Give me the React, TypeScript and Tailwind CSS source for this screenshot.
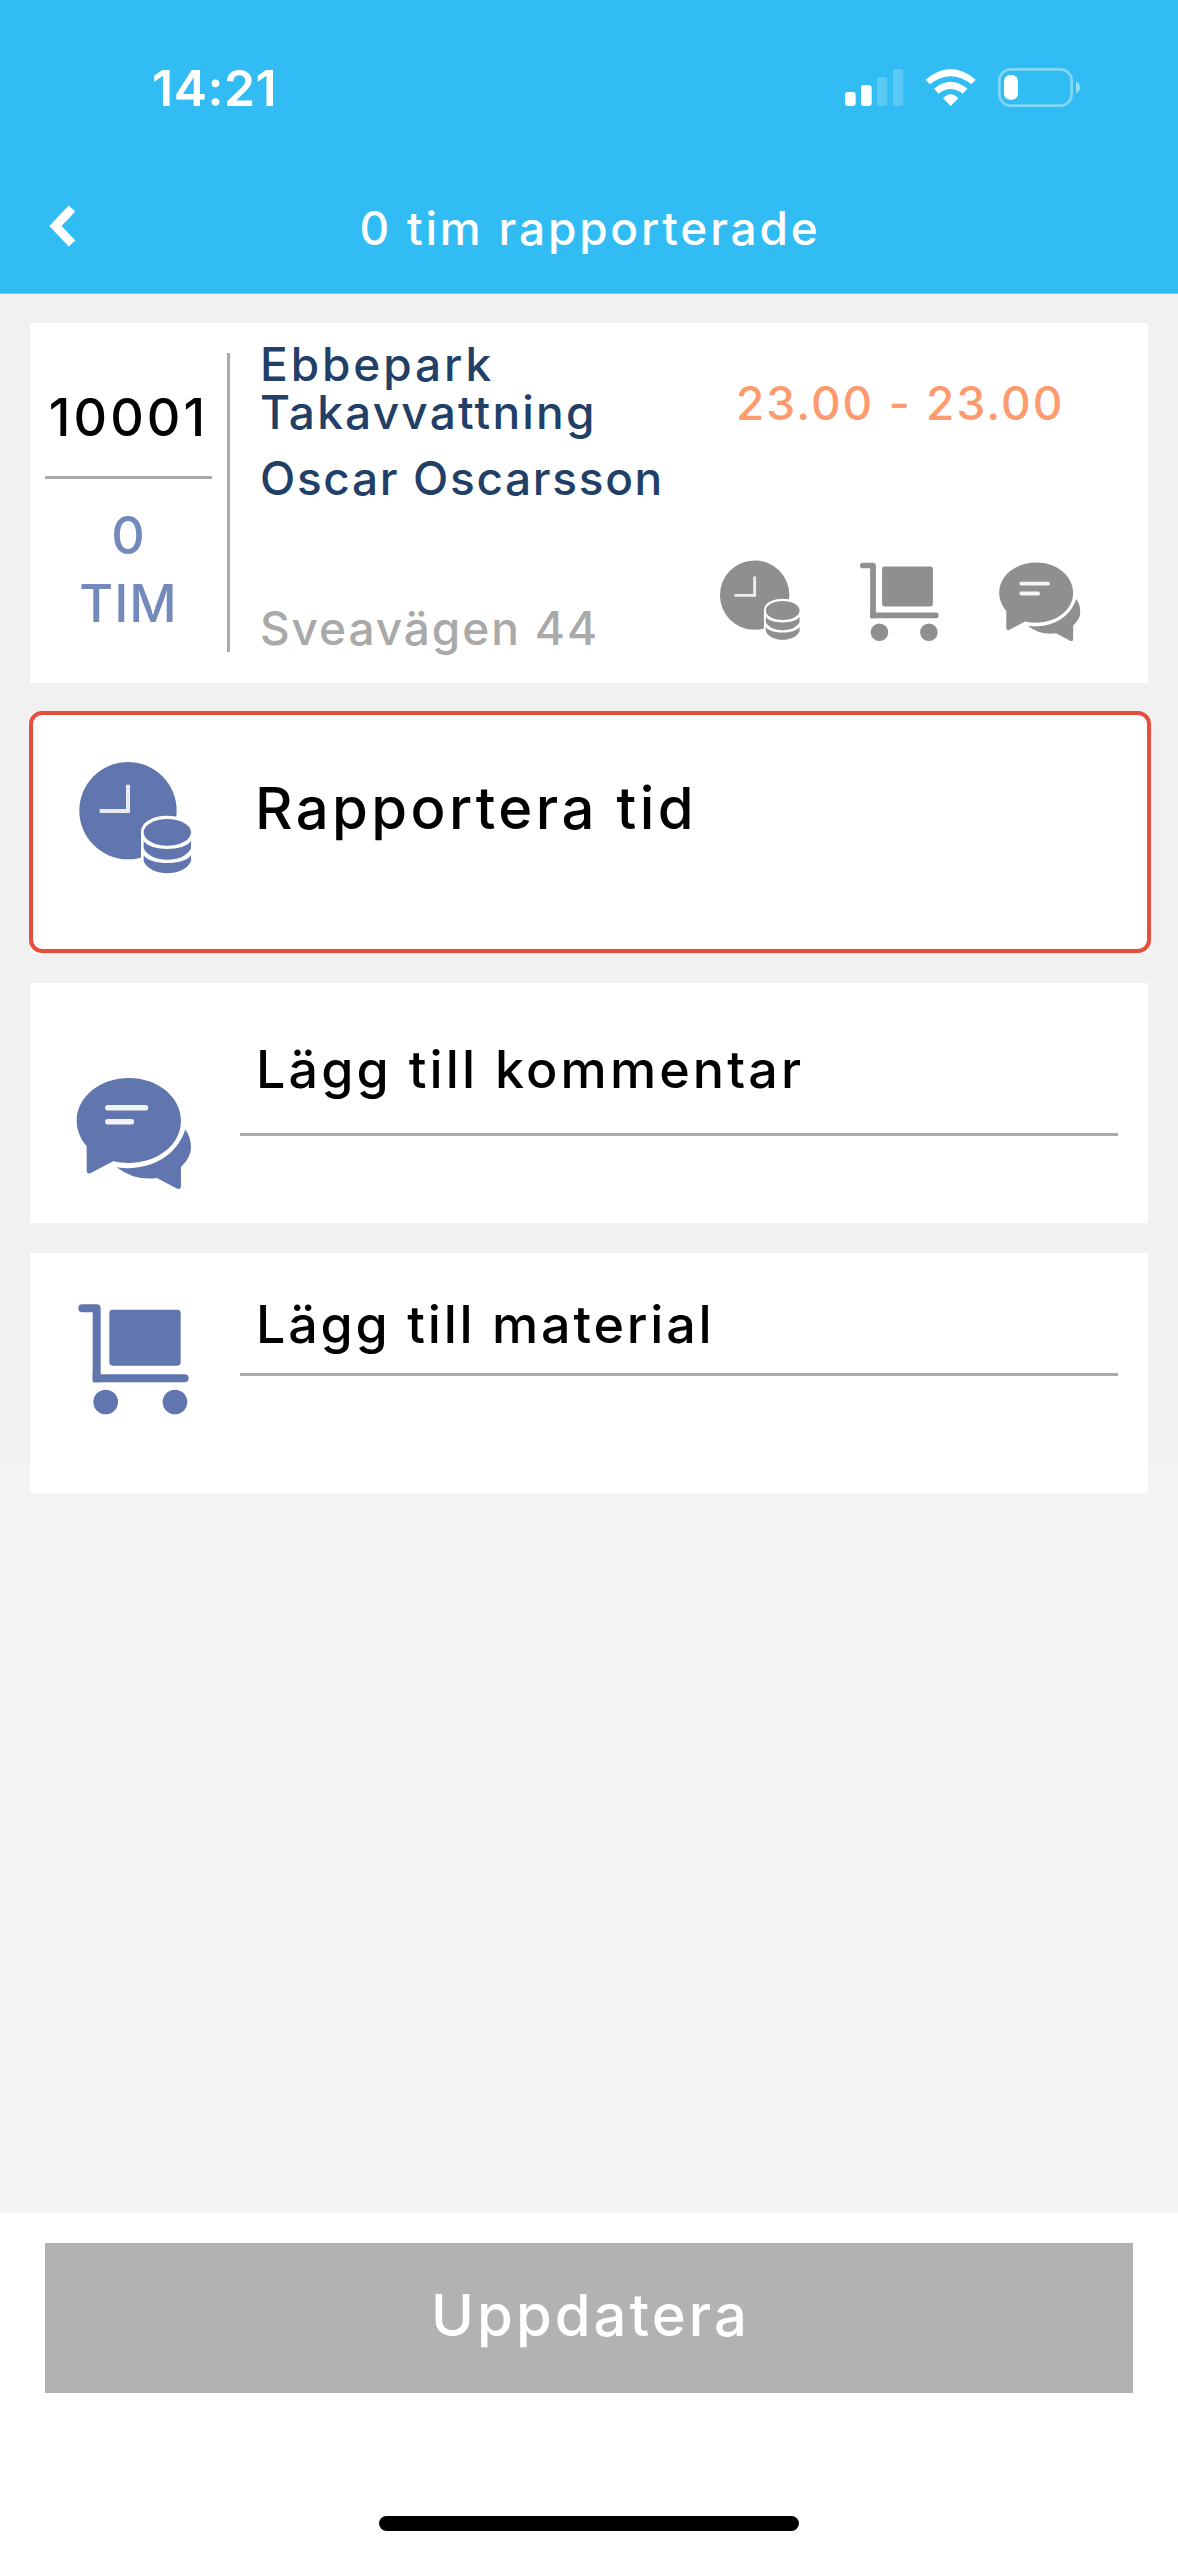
import React from "react";

type IconProps = {
  className?: string;
};

const ClockIcon: React.FC<IconProps> = ({ className }) => (
  <svg viewBox="175 181 345 345" className={className} fill="currentColor">
    <circle cx="325" cy="333" r="146" />
    <path
      d="M325 255 V334 H240"
      fill="none"
      stroke="#fff"
      strokeOpacity="0.85"
      strokeWidth="12"
    />
    {/* coin stack with a white edge against the clock */}
    <path
      d="M364 480 V398 C364 332 522 332 522 398 V490 H364 Z"
      fill="#fff"
    />
    <ellipse cx="443" cy="398" rx="71" ry="40" />
    <path d="M372 424 C392 456 494 456 514 424 V446 C494 492 392 492 372 446 Z" />
    <path d="M372 467 C392 498 494 498 514 467 V485 C494 533 392 533 372 485 Z" />
  </svg>
);

const TrolleyIcon: React.FC<IconProps> = ({ className }) => (
  <svg viewBox="170 187 345 345" className={className} fill="currentColor">
    <path
      d="M186 206 H229 V416 H493"
      fill="none"
      stroke="currentColor"
      strokeWidth="24"
      strokeLinecap="round"
      strokeLinejoin="round"
    />
    <path d="M217 400 H241 V428 H217 Z" />
    <rect x="267" y="210" width="214" height="168" rx="10" />
    <circle cx="256" cy="487" r="37" />
    <circle cx="464" cy="487" r="37" />
  </svg>
);

const ChatIcon: React.FC<IconProps> = ({ className }) => (
  <svg viewBox="165 320 350 350" className={className} fill="currentColor">
    <path d="M326 326 C412 326 482 382 482 454 C482 526 412 580 326 580 Q300 580 279 575 L211 611 Q200 614 200 603 V530 C182 510 170 482 170 454 C170 382 240 326 326 326 Z" />
    <path
      d="M263 415 H376 M263 457 H334"
      stroke="#fff"
      strokeOpacity="0.92"
      strokeWidth="16"
      strokeLinecap="round"
    />
    <path d="M495 480 Q512 503 512 535 Q511 566 482 592 V651 Q481 660 471 657 L410 625 Q344 635 290 593 C370 606 465 572 495 480 Z" />
  </svg>
);

const StatusIcons: React.FC<IconProps> = ({ className }) => (
  <svg viewBox="135 81 708 123" className={className} fill="#fff">
    <rect x="135" y="156" width="32" height="42" rx="9" />
    <rect x="183" y="135" width="32" height="63" rx="9" />
    <rect x="231" y="111" width="31" height="87" rx="9" opacity="0.2" />
    <rect x="279" y="87" width="31" height="111" rx="9" opacity="0.2" />
    <path d="M377 119 Q452 55 527 119 L514 133 Q452 85 390 133 Z" />
    <path d="M402 146 Q452 104 502 146 L488 161 Q452 133 416 161 Z" />
    <path d="M429 175 Q452 151 475 175 L452 198 Z" />
    <rect
      x="598"
      y="88"
      width="217"
      height="109"
      rx="34"
      fill="none"
      stroke="#fff"
      strokeWidth="8"
      opacity="0.4"
    />
    <rect x="612" y="105" width="42" height="74" rx="18" />
    <path d="M828 124 Q840 130 840 142 Q840 154 828 160 Z" opacity="0.5" />
  </svg>
);

const Header: React.FC = () => (
  <header className="h-[294px] bg-[#31bdf3] border-b border-[#a9b9c1] text-white">
    <div className="flex h-[176px] items-center justify-between pl-[152px] pr-[97px]">
      <span className="text-[50px] font-semibold leading-none tracking-[0.5px]">
        14:21
      </span>
      <StatusIcons className="h-[41px] w-[236px] mb-[2px]" />
    </div>
    <div className="grid h-[104px] grid-cols-[100px_1fr_100px] items-center">
      <button aria-label="Tillbaka" className="pl-[47px] pb-[4px]">
        <svg
          viewBox="0 0 30 44"
          className="h-[44px] w-[30px]"
          fill="none"
          stroke="#fff"
          strokeWidth="9"
        >
          <path d="M25 4.5 L8.500 22 L25 39.500" />
        </svg>
      </button>
      <h1 className="pl-[2px] text-center text-[46px] font-medium leading-none tracking-[2.8px]">
        0 tim rapporterade
      </h1>
    </div>
  </header>
);

const JobCard: React.FC = () => (
  <section className="flex h-[360px] shrink-0 bg-white py-[30px] pl-[15px]">
    <div className="flex w-[167px] flex-col items-center text-[52px] font-medium">
      <div className="flex h-[126px] w-full items-center justify-center border-b-[3px] border-[#a9a9a9] pt-[6px] tracking-[3.1px] text-black">
        10001
      </div>
      <div className="pt-[23px] text-center leading-[68px] tracking-[1px] text-[#748abd]">
        0
        <br />
        TIM
      </div>
    </div>
    <div className="ml-[15px] h-[299px] w-[3px] bg-[#a9a9a9]"></div>
    <div className="ml-[30px] -mt-[13px] w-[420px] text-[46px] font-medium leading-[48px] text-[#223f67]">
      <p className="tracking-[2.9px]">Ebbepark</p>
      <p className="tracking-[2.2px]">Takavvattning</p>
      <p className="mt-[18px] tracking-[1.65px]">Oscar Oscarsson</p>
      <p className="mt-[102px] tracking-[1.9px] text-[#a9a9a9]">Sveavägen 44</p>
    </div>
    <div className="ml-[39px] text-[#8f8f8f]">
      <p className="mt-[26px] ml-[17px] text-[46px] font-medium leading-[48px] tracking-[2px] text-[#fd9b6e]">
        23.00 - 23.00
      </p>
      <div className="mt-[132px] flex">
        <ClockIcon className="size-[82px]" />
        <TrolleyIcon className="ml-[58px] mt-[2px] size-[82px]" />
        <ChatIcon className="ml-[57px] mt-[2px] size-[83px]" />
      </div>
    </div>
  </section>
);

const App: React.FC = () => {
  return (
    <div className="flex h-[2555px] w-[1178px] flex-col overflow-hidden bg-[#f3f3f3] font-['Inter','Liberation_Sans',sans-serif]">
      <Header />

      <main className="flex h-[1168px] flex-col gap-[30px] bg-[#f1f1f1] px-[30px] pt-[29px]">
        <JobCard />

        {/* Rapportera tid */}
        <section className="h-[240px] shrink-0 bg-white">
          <div className="-ml-px -mt-[2px] flex h-[242px] w-[1122px] rounded-[13px] border-4 border-[#e64f3d]">
            <ClockIcon className="ml-[45px] mt-[45px] size-[115px] text-[#6176af]" />
            <p className="ml-[62px] mt-[63px] text-[58px] font-medium leading-[60px] tracking-[3.4px] text-black">
              Rapportera tid
            </p>
          </div>
        </section>

        {/* Kommentar */}
        <section className="flex h-[240px] shrink-0 bg-white">
          <ChatIcon className="ml-[45px] mt-[93px] size-[117px] text-[#6176af]" />
          <div className="ml-[48px] h-[153px] w-[878px] border-b-[3px] border-[#a9a9a9] pl-[16px] pt-[57px]">
            <p className="text-[52px] font-medium leading-[60px] tracking-[3.1px] text-black">
              Lägg till kommentar
            </p>
          </div>
        </section>

        {/* Material */}
        <section className="flex h-[240px] shrink-0 bg-white">
          <TrolleyIcon className="ml-[47px] mt-[49px] size-[115px] text-[#6176af]" />
          <div className="ml-[48px] h-[123px] w-[878px] border-b-[3px] border-[#a9a9a9] pl-[16px] pt-[42px]">
            <p className="text-[52px] font-medium leading-[60px] tracking-[2.8px] text-black">
              Lägg till material
            </p>
          </div>
        </section>
      </main>

      <footer className="mt-auto flex h-[342px] flex-col items-center bg-white pt-[30px]">
        <button className="h-[150px] w-[1088px] bg-[#b2b2b2] pb-[6px] pl-[3px] text-[58px] font-medium leading-none tracking-[3px] text-white">
          Uppdatera
        </button>
        <div className="mt-[123px] h-[15px] w-[420px] rounded-full bg-black"></div>
      </footer>
    </div>
  );
};

export default App;
